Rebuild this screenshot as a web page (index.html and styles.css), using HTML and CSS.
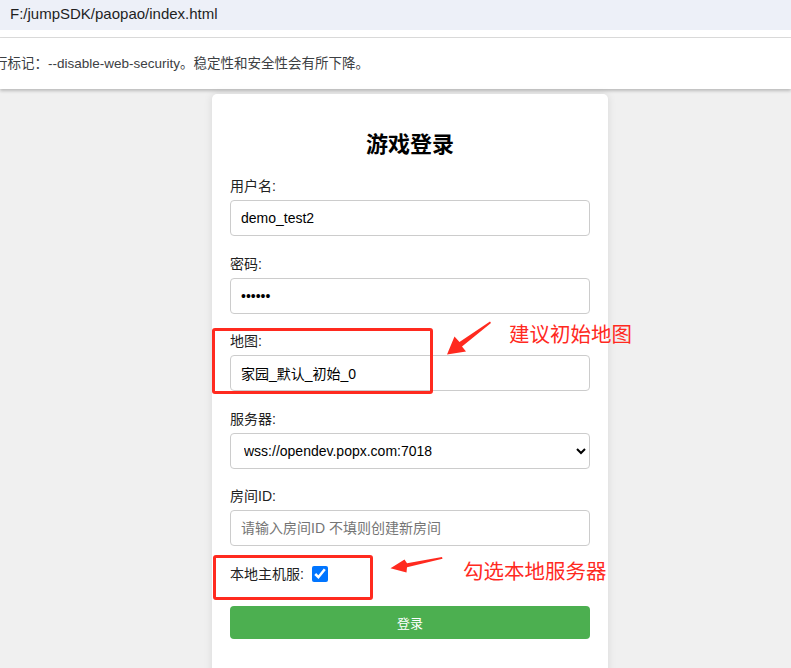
FILE: index.html
```html
<!DOCTYPE html>
<html lang="zh-CN">
<head>
<meta charset="utf-8">
<title>游戏登录</title>
<link rel="stylesheet" href="styles.css">
</head>
<body>
<div class="topbar">F:/jumpSDK/paopao/index.html</div>
<div class="strip"></div>
<div class="banner"><span class="banner-text">行标记：--disable-web-security。稳定性和安全性会有所下降。</span></div>

<div class="card">
  <h2 class="title">游戏登录</h2>
  <div class="group">
    <label class="label">用户名:</label>
    <input class="field" type="text" value="demo_test2">
  </div>
  <div class="group">
    <label class="label">密码:</label>
    <input class="field" type="password" value="123456">
  </div>
  <div class="group">
    <label class="label">地图:</label>
    <input class="field" type="text" value="家园_默认_初始_0">
  </div>
  <div class="group">
    <label class="label">服务器:</label>
    <select class="field select">
      <option>wss://opendev.popx.com:7018</option>
    </select>
  </div>
  <div class="group">
    <label class="label">房间ID:</label>
    <input class="field" type="text" placeholder="请输入房间ID 不填则创建新房间">
  </div>
  <div class="check-row">
    <label class="label inline">本地主机服:</label>
    <input class="check" type="checkbox" checked>
  </div>
  <button class="btn">登录</button>
</div>

<div class="mark mark-map"></div>
<div class="mark mark-local"></div>
<div class="note note-map">建议初始地图</div>
<div class="note note-local">勾选本地服务器</div>
<svg class="arrows" width="791" height="668" viewBox="0 0 791 668">
  <polygon fill="#ff2a1f" points="490,321.5 491,323 462,346.5 466,351.5 447,354.5 454.5,336.5 459.5,342"/>
  <polygon fill="#ff2a1f" points="442,557 442.5,558.8 407,567.2 406.5,572.5 390.5,568.3 404.5,559.5 407,563.3"/>
</svg>
</body>
</html>
```
FILE: styles.css
```css
html, body {
  margin: 0;
  padding: 0;
}
body {
  position: relative;
  background: #f0f0f0;
  font-family: "Liberation Sans", "Noto Sans CJK SC", sans-serif;
  color: #000;
  height: 668px;
  overflow: hidden;
}
.topbar {
  height: 30px;
  line-height: 28px;
  padding-left: 10px;
  background: #edf0f8;
  font-size: 15px;
  color: #1f1f1f;
}
.strip {
  height: 7px;
  background: #fff;
  border-bottom: 1px solid #dcdcdc;
}
.banner {
  height: 51px;
  line-height: 51px;
  background: #fff;
  font-size: 13.5px;
  color: #3c4043;
  box-shadow: 0 2px 3px rgba(0, 0, 0, 0.22);
  overflow: hidden;
  white-space: nowrap;
}
.banner-text {
  display: inline-block;
  margin-left: -6px;
}
.card {
  box-sizing: border-box;
  width: 396px;
  margin: 5px 0 0 212px;
  padding: 20px 18px 40px;
  background: #fff;
  border-radius: 5px;
  box-shadow: 0 0 8px rgba(0, 0, 0, 0.1);
}
.title {
  margin: 18px 0 19px;
  font-size: 22px;
  line-height: 26px;
  font-weight: bold;
  text-align: center;
}
.group {
  margin-bottom: 18.5px;
}
.label {
  display: block;
  height: 18px;
  line-height: 18px;
  margin-bottom: 5px;
  font-size: 14px;
  color: #222;
}
.label.inline {
  display: inline-block;
  margin: 0 8px 0 0;
}
.field {
  box-sizing: border-box;
  display: block;
  width: 100%;
  height: 36px;
  margin: 0;
  padding: 0 10px;
  border: 1px solid #ccc;
  border-radius: 4px;
  background: #fff;
  font-family: "Liberation Sans", "Noto Sans CJK SC", sans-serif;
  font-size: 14px;
  color: #000;
}
.field::placeholder {
  color: #757575;
}
.select {
  padding-left: 9px;
}
.check-row {
  display: flex;
  align-items: center;
  height: 18px;
  margin-bottom: 23.5px;
}
.check {
  width: 16px;
  height: 16px;
  margin: 0;
  accent-color: #0075ff;
}
.btn {
  display: block;
  width: 100%;
  height: 33px;
  border: none;
  border-radius: 4px;
  background: #4caf50;
  color: #fff;
  font-family: "Liberation Sans", "Noto Sans CJK SC", sans-serif;
  font-size: 13px;
}
.mark {
  position: absolute;
  box-sizing: border-box;
  border: 3px solid #ff2a1f;
  border-radius: 3px;
}
.mark-map {
  left: 212px;
  top: 328px;
  width: 221px;
  height: 66px;
}
.mark-local {
  left: 213px;
  top: 555px;
  width: 160px;
  height: 45px;
}
.note {
  position: absolute;
  font-family: "Noto Sans CJK SC", sans-serif;
  font-size: 20.5px;
  line-height: 24px;
  color: #ff2a1f;
  white-space: nowrap;
}
.note-map {
  left: 509px;
  top: 321px;
}
.note-local {
  left: 463px;
  top: 558px;
}
.arrows {
  position: absolute;
  left: 0;
  top: 0;
  pointer-events: none;
}
```
